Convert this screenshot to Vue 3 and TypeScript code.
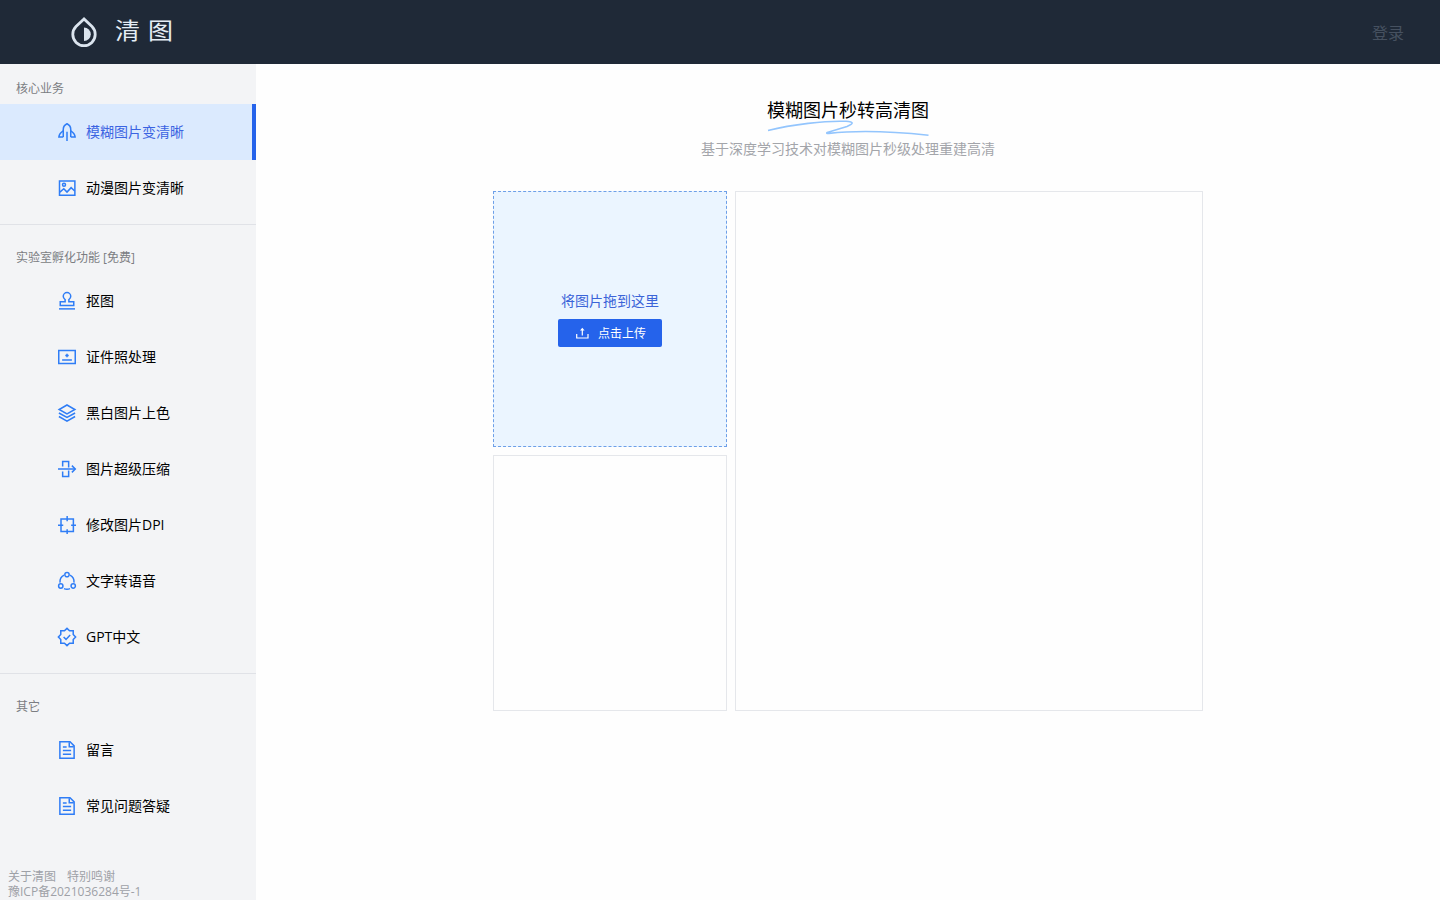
<script setup lang="ts">
interface MenuItem {
  label: string
  icon: string[]
  active?: boolean
}
interface MenuGroup {
  title: string
  items: MenuItem[]
}

const doc = [
  'M2.500 1h13.500l5.500 5.500V23h-19z',
  'M15 1.500v6h6',
  'M6.500 8h5M6.500 12.700h11M6.500 17.500h11',
]

const groups: MenuGroup[] = [
  {
    title: '核心业务',
    items: [
      {
        label: '模糊图片变清晰',
        active: true,
        icon: [
          'M7 18.500V8.500C7 5 9 2.500 12 1 15 2.500 17 5 17 8.500v10',
          'M7 10.500C3.800 12.500 1.500 15 1.200 18.500H7M17 10.500c3.200 2 5.500 4.500 5.800 8H17',
          'M12 11.500V24',
        ],
      },
      {
        label: '动漫图片变清晰',
        icon: [
          'M2 2.500h20.500v19H2z',
          'M2.500 17.500l5.200-4.500 4.300 4.500 5.500-6 4.800 4.500',
          'M10 7.700a2 2 0 1 1-4 0 2 2 0 0 1 4 0z',
        ],
      },
    ],
  },
  {
    title: '实验室孵化功能 [免费]',
    items: [
      {
        label: '抠图',
        icon: [
          'M3 18V13H9.500V10.200C8 9.200 7 7.800 7 5.800a5 5 0 0 1 10 0c0 2-1 3.400-2.500 4.400V13H21v5z',
          'M1.300 22.500h21.400',
        ],
      },
      {
        label: '证件照处理',
        icon: ['M1 3.300h22v17.400H1z', 'M5.500 16h13', 'M12 7.800v4.600M9.700 10.100h4.600'],
      },
      {
        label: '黑白图片上色',
        icon: [
          'M12 1.300l10.500 6L12 13.300 1.500 7.300z',
          'M1.200 12l10.800 6 10.800-6',
          'M1.200 16.700L12 22.800l10.800-6.100',
        ],
      },
      {
        label: '图片超级压缩',
        icon: [
          'M0 12h23',
          'M18.500 7.500l4.500 4.500-4.500 4.500',
          'M6.200 8.800V2h8v8M6.200 15.200V22h8v-8',
        ],
      },
      {
        label: '修改图片DPI',
        icon: [
          'M4 4h16.500v16.500H4z',
          'M12.200 0V7M12.200 17.500v6.500M0 12.200H7M17.500 12.200H24',
        ],
      },
      {
        label: '文字转语音',
        icon: [
          'M14.900 3.500a2.900 2.900 0 1 1-5.800 0 2.900 2.900 0 0 1 5.800 0z',
          'M6.600 18.600a2.900 2.900 0 1 1-5.800 0 2.900 2.900 0 0 1 5.800 0z',
          'M23.200 18.600a2.900 2.900 0 1 1-5.800 0 2.900 2.900 0 0 1 5.800 0z',
          'M8 4.200C4.200 6 2.300 9.800 2.700 14.200M16 4.200c3.800 1.800 5.700 5.600 5.300 10M8 22.200c2.500 1.100 5.500 1.100 8 0',
        ],
      },
      {
        label: 'GPT中文',
        icon: [
          'M12 .5l3.400 3.200h4.900v4.900L23.500 12l-3.200 3.400v4.900h-4.900L12 23.500l-3.400-3.200H3.700v-4.900L.5 12l3.200-3.400V3.700h4.900z',
          'M7.500 12l3.200 3.200 5.500-6',
        ],
      },
    ],
  },
  {
    title: '其它',
    items: [
      { label: '留言', icon: doc },
      { label: '常见问题答疑', icon: doc },
    ],
  },
]
</script>

<template>
  <div class="page">
    <header class="header">
      <div class="brand">
        <svg class="logo" viewBox="0 0 28 32">
          <path d="M14 3L6 10.600a11.200 11.200 0 1 0 16 0z" />
          <path class="half" d="M14 11.500a6.800 6.800 0 0 1 0 13.600z" />
        </svg>
        <span class="brand-name">清图</span>
      </div>
      <a class="login">登录</a>
    </header>

    <div class="body">
      <aside class="sidebar">
        <nav>
          <section v-for="group in groups" :key="group.title" class="group">
            <h2 class="group-title">{{ group.title }}</h2>
            <a
              v-for="item in group.items"
              :key="item.label"
              class="item"
              :class="{ active: item.active }"
            >
              <svg class="icon" viewBox="0 0 24 24">
                <path v-for="d in item.icon" :key="d" :d="d" />
              </svg>
              <span>{{ item.label }}</span>
            </a>
          </section>
        </nav>
        <footer class="footer">
          <div class="links"><a>关于清图</a><a>特别鸣谢</a></div>
          <div>豫ICP备2021036284号-1</div>
        </footer>
      </aside>

      <main class="main">
        <h1 class="title">模糊图片秒转高清图</h1>
        <svg class="squiggle" viewBox="0 0 162 16">
          <path d="M1 10.500C25 4.500 58 .5 79 1.300 87 1.800 87 3.200 80 6.500L61 12.200c-2 .7-1.500 1.500 1 1.200C88 10.500 126 11.500 161.500 15.200" />
        </svg>
        <p class="subtitle">基于深度学习技术对模糊图片秒级处理重建高清</p>
        <div class="panels">
          <div class="drop">
            <span class="drop-text">将图片拖到这里</span>
            <button class="upload">
              <svg viewBox="0 0 14 14">
                <path d="M1.700 8v4h11.300V8M7.300 9.500V3" />
                <path class="head" d="M5 4.500l2.300-2.800 2.300 2.800z" />
              </svg>
              <span>点击上传</span>
            </button>
          </div>
          <div class="panel"></div>
          <div class="panel result"></div>
        </div>
      </main>
    </div>
  </div>
</template>

<style>
body {
  margin: 0;
  background: #fefefe;
}
</style>

<style scoped>
.page {
  height: 900px;
  display: flex;
  flex-direction: column;
  overflow: hidden;
  font-family: "Open Sans", "Noto Sans CJK SC", sans-serif;
  font-size: 14px;
  color: #000;
}
.header {
  height: 64px;
  flex: none;
  display: flex;
  align-items: center;
  justify-content: space-between;
  background: #1f2937;
  padding: 0 36px 0 70px;
  box-sizing: border-box;
}
.brand {
  display: flex;
  align-items: center;
}
.logo {
  width: 28px;
  height: 32px;
  fill: none;
  stroke: #dbe4ee;
  stroke-width: 2.800;
}
.logo .half {
  fill: #dbe4ee;
  stroke: none;
}
.brand-name {
  margin-left: 17px;
  padding-bottom: 3px;
  color: #e5edf5;
  font-size: 25px;
  font-weight: 400;
  line-height: 29px;
  letter-spacing: 8px;
  transform: scaleY(0.9);
}
.login {
  font-size: 16px;
  line-height: 24px;
  padding-top: 1px;
  color: #465160;
}
.body {
  flex: 1;
  min-height: 0;
  display: flex;
}
.sidebar {
  width: 256px;
  flex: none;
  display: flex;
  flex-direction: column;
  justify-content: space-between;
  background: #f3f4f6;
}
.group {
  padding: 24px 0 8px;
  border-bottom: 1px solid #e0e2e7;
}
.group:first-child {
  padding-top: 16px;
}
.group:last-child {
  border-bottom: none;
}
.group-title {
  margin: 0 0 7px;
  padding: 1px 0 0 16px;
  font-size: 12px;
  line-height: 16px;
  font-weight: 400;
  color: #7b7d82;
}
.item {
  height: 56px;
  box-sizing: border-box;
  padding-left: 58px;
  border-right: 4px solid transparent;
  display: flex;
  align-items: center;
  gap: 10px;
  line-height: 20px;
}
.item.active {
  background: #dbeafe;
  border-right-color: #2563eb;
  color: #3b64e2;
}
.icon {
  width: 18px;
  height: 18px;
  overflow: visible;
  fill: none;
  stroke: #2f7df6;
  stroke-width: 2;
}
.footer {
  padding-left: 8px;
  font-size: 12px;
  line-height: 16px;
  color: #9ea1a7;
}
.links {
  display: flex;
  gap: 11px;
  padding-top: 1px;
  height: 15px;
}
.main {
  flex: 1;
  display: flex;
  flex-direction: column;
  align-items: center;
}
.title {
  margin: 32px 0 0;
  font-size: 18px;
  line-height: 28px;
  font-weight: 400;
}
.squiggle {
  width: 162px;
  height: 16px;
  margin-top: -4px;
  fill: none;
  stroke: #93c5fd;
  stroke-width: 1.600;
}
.subtitle {
  margin: 3px 0 32px;
  line-height: 20px;
  color: #a3a5aa;
}
.panels {
  display: grid;
  grid-template-columns: 234px 468px;
  grid-template-rows: 256px 256px;
  gap: 8px;
}
.panel {
  border: 1px solid #e5e7eb;
}
.result {
  grid-column: 2;
  grid-row: 1 / 3;
}
.drop {
  border: 1px dashed #6d9fe8;
  background: #ebf5ff;
  display: flex;
  flex-direction: column;
  align-items: center;
  justify-content: center;
  gap: 8px;
}
.drop-text {
  line-height: 20px;
  color: #3b64d8;
}
.upload {
  width: 104px;
  height: 28px;
  border: 0;
  border-radius: 2px;
  padding: 0;
  display: flex;
  align-items: center;
  justify-content: center;
  gap: 9px;
  background: #2563eb;
  color: #fff;
  font-family: inherit;
  font-size: 12px;
  line-height: 16px;
}
.upload span {
  padding-top: 1px;
}
.upload svg {
  width: 14px;
  height: 14px;
  margin-left: 1px;
  fill: none;
  stroke: #fff;
  stroke-width: 1.200;
}
.upload .head {
  fill: #fff;
  stroke: none;
}
</style>
